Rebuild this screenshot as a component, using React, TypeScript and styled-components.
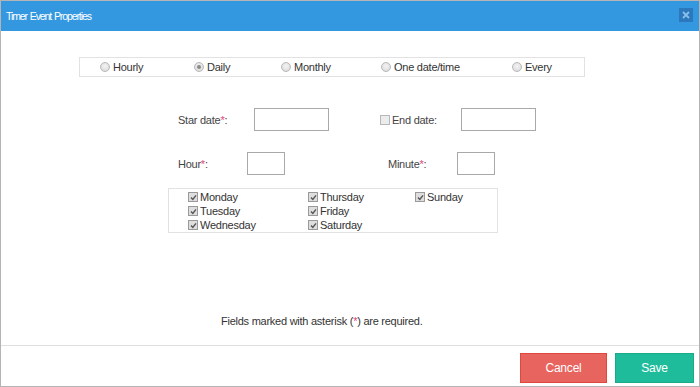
import React from 'react';
import styled, { createGlobalStyle } from 'styled-components';

const GlobalStyle = createGlobalStyle`
  html, body {
    margin: 0;
    padding: 0;
    background: #ffffff;
  }
  body {
    font-family: "Liberation Sans", Arial, sans-serif;
  }
`;

const Dialog = styled.div`
  width: 700px;
  height: 387px;
  box-sizing: border-box;
  border: 1px solid #b4b4b4;
  display: flex;
  flex-direction: column;
  background: #fff;
`;

const Header = styled.div`
  height: 30px;
  background: #3498e0;
  display: flex;
  align-items: center;
  justify-content: space-between;
  padding: 0 6px 0 5px;
`;

const Title = styled.div`
  color: #fff;
  font-size: 10.5px;
  letter-spacing: -1.1px;
  word-spacing: 1px;
`;

const CloseButton = styled.div`
  width: 14px;
  height: 14px;
  background: #2b78bc;
  display: flex;
  align-items: center;
  justify-content: center;
  margin-top: -2px;
`;

const Body = styled.div`
  flex: 1;
  display: flex;
  flex-direction: column;
  color: #333;
  font-size: 11px;
  letter-spacing: -0.25px;
`;

const RadioBar = styled.div`
  margin: 26px 0 0 78px;
  width: 506px;
  height: 20px;
  box-sizing: border-box;
  border: 1px solid #e2e2e2;
  display: grid;
  grid-template-columns: 94px 87px 100px 131px 1fr;
  align-items: center;
  padding-left: 20px;
`;

const Option = styled.label`
  display: flex;
  align-items: center;
  gap: 3px;
`;

const Radio = styled.span<{ $checked?: boolean }>`
  width: 8px;
  height: 8px;
  border-radius: 50%;
  border: 1px solid #b8b8b8;
  background: radial-gradient(circle at 50% 40%, #f4f4f4, #d6d6d6);
  display: flex;
  align-items: center;
  justify-content: center;

  &::after {
    content: '';
    width: 4px;
    height: 4px;
    border-radius: 50%;
    background: ${p => (p.$checked ? '#8a8a8a' : 'transparent')};
  }
`;

const FieldRow = styled.div<{ $cols: string; $top: number }>`
  display: grid;
  grid-template-columns: ${p => p.$cols};
  align-items: center;
  margin: ${p => p.$top}px 0 0 177px;
`;

const Label = styled.span`
  display: flex;
  align-items: center;
  gap: 2px;
  color: #444;
`;

const Star = styled.span`
  color: #e2457a;
`;

const TextBox = styled.div<{ $w: number }>`
  width: ${p => p.$w}px;
  height: 23px;
  box-sizing: border-box;
  border: 1px solid #a9a9a9;
  background: #fff;
`;

const Box = styled.span<{ $checked?: boolean }>`
  width: 8px;
  height: 8px;
  border: 1px solid ${p => (p.$checked ? '#9a9a9a' : '#b8b8b8')};
  background: ${p => (p.$checked ? '#dedede' : '#ececec')};
  display: flex;
  align-items: center;
  justify-content: center;
  flex-shrink: 0;
`;

const DaysBox = styled.div`
  margin: 13px 0 0 167px;
  width: 330px;
  height: 45px;
  box-sizing: border-box;
  border: 1px solid #e2e2e2;
  display: grid;
  grid-template-columns: 120px 107px 1fr;
  grid-template-rows: repeat(3, 14px);
  grid-auto-flow: column;
  padding: 1px 0 0 19px;
`;

const Day = styled.label`
  display: flex;
  align-items: center;
  gap: 2px;
  color: #333;
`;

const Note = styled.div`
  margin: 81px 0 0 220px;
  line-height: 14px;
  color: #333;
`;

const Footer = styled.div`
  border-top: 1px solid #dedede;
  height: 41px;
  box-sizing: border-box;
  display: flex;
  justify-content: flex-end;
  align-items: flex-start;
  gap: 8px;
  padding: 7px 5px 0 0;
`;

const Button = styled.div<{ $variant: 'cancel' | 'save' }>`
  width: ${p => (p.$variant === 'cancel' ? 87 : 79)}px;
  height: 30px;
  box-sizing: border-box;
  border: 1px solid ${p => (p.$variant === 'cancel' ? '#e0483f' : '#19a98b')};
  background: ${p => (p.$variant === 'cancel' ? '#e8655f' : '#1fbc9c')};
  color: #fff;
  font-size: 12px;
  letter-spacing: -0.2px;
  display: flex;
  align-items: center;
  justify-content: center;
`;

const CheckMark = () => (
  <svg width="7" height="7" viewBox="0 0 7 7">
    <path d="M1 3.6 L2.8 5.4 L6 1.4" fill="none" stroke="#555" strokeWidth="1.4" />
  </svg>
);

const modes = ['Hourly', 'Daily', 'Monthly', 'One date/time', 'Every'];
const days = ['Monday', 'Tuesday', 'Wednesday', 'Thursday', 'Friday', 'Saturday', 'Sunday'];

export default function App() {
  return (
    <>
      <GlobalStyle />
      <Dialog>
        <Header>
          <Title>Timer Event Properties</Title>
          <CloseButton>
            <svg width="8" height="8" viewBox="0 0 8 8">
              <path d="M1 1 L7 7 M7 1 L1 7" stroke="#86bfe9" strokeWidth="1.8" />
            </svg>
          </CloseButton>
        </Header>
        <Body>
          <RadioBar>
            {modes.map(m => (
              <Option key={m}>
                <Radio $checked={m === 'Daily'} />
                {m}
              </Option>
            ))}
          </RadioBar>

          <FieldRow $cols="76px 75px 51px 81px 75px" $top={31}>
            <Label>
              <span>
                Star date<Star>*</Star>:
              </span>
            </Label>
            <TextBox $w={75} />
            <span />
            <Label>
              <Box />
              End date:
            </Label>
            <TextBox $w={75} />
          </FieldRow>

          <FieldRow $cols="69px 38px 103px 69px 38px" $top={21}>
            <Label>
              <span>
                Hour<Star>*</Star>:
              </span>
            </Label>
            <TextBox $w={38} />
            <span />
            <Label>
              <span>
                Minute<Star>*</Star>:
              </span>
            </Label>
            <TextBox $w={38} />
          </FieldRow>

          <DaysBox>
            {days.map(d => (
              <Day key={d}>
                <Box $checked>
                  <CheckMark />
                </Box>
                {d}
              </Day>
            ))}
          </DaysBox>

          <Note>
            Fields marked with asterisk (<Star>*</Star>) are required.
          </Note>
        </Body>
        <Footer>
          <Button $variant="cancel">Cancel</Button>
          <Button $variant="save">Save</Button>
        </Footer>
      </Dialog>
    </>
  );
}
